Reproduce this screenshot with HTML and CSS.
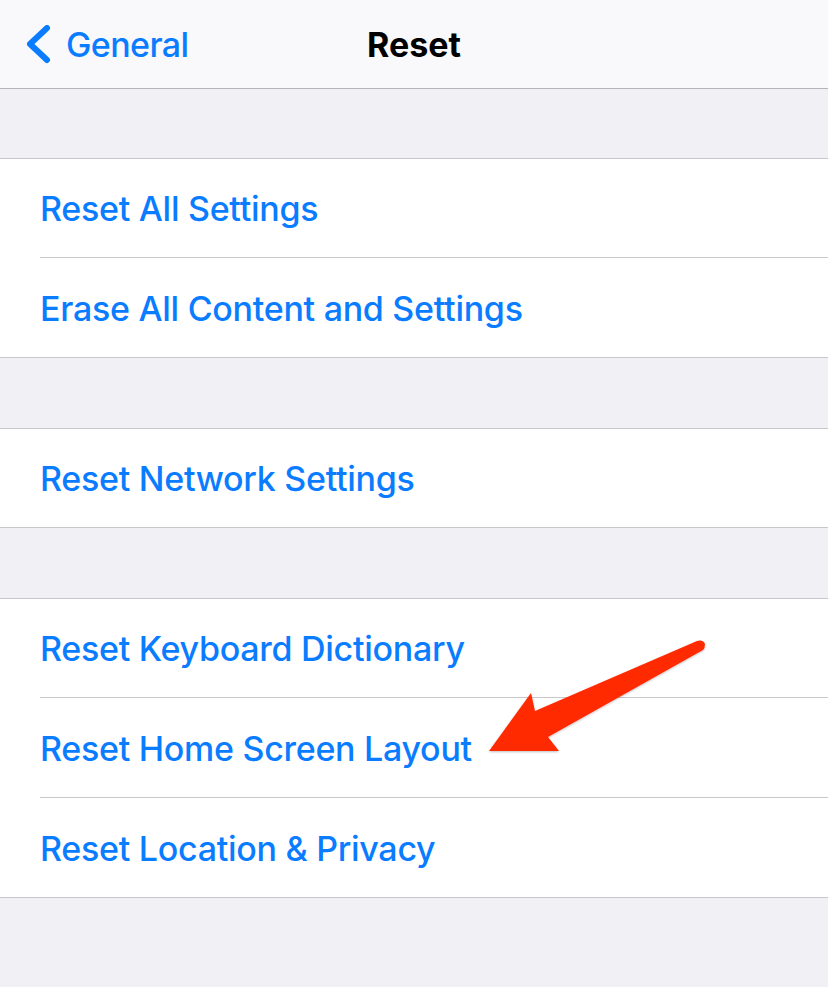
FILE: index.html
```html
<!DOCTYPE html>
<html lang="en">
<head>
    <meta charset="UTF-8">
    <meta name="viewport" content="width=device-width, initial-scale=1.0">
    <title>Reset</title>
    <link rel="stylesheet" href="styles.css">
</head>

<body>
<main class="screen">
    <header class="nav">
        <a class="back" href="#">
            <svg class="chevron" width="26" height="40" viewBox="0 0 26 40">
                <polyline points="21,3 4,19 21,35" fill="none" stroke="#0a7cff" stroke-width="6" stroke-linecap="round" stroke-linejoin="round"/>
            </svg>
            General
        </a>
        <h1 class="title">Reset</h1>
    </header>

    <div class="spacer"></div>
    <section class="group">
        <div class="row">Reset All Settings</div>
        <div class="row">Erase All Content and Settings</div>
    </section>

    <div class="spacer"></div>
    <section class="group">
        <div class="row">Reset Network Settings</div>
    </section>

    <div class="spacer"></div>
    <section class="group">
        <div class="row">Reset Keyboard Dictionary</div>
        <div class="row">Reset Home Screen Layout</div>
        <div class="row">Reset Location &amp; Privacy</div>
    </section>

    <!-- red pointer drawn over the list -->
    <svg class="pointer" width="240" height="130" viewBox="480 630 240 130">
        <defs>
            <filter id="shade" x="-10%" y="-10%" width="120%" height="130%">
                <feDropShadow dx="0" dy="1" stdDeviation="1" flood-color="#000" flood-opacity="0.25"/>
            </filter>
        </defs>
        <path d="M697,641 Q703,639 705,644 Q705,648 703,650 L548,737 L559,751 L489,751 L531,693 L535,711 Z" fill="#ff2a00" filter="url(#shade)"/>
    </svg>
</main>
</body>
</html>
```

FILE: styles.css
```css
body {
    margin: 0;
    background-color: #f0f0f5;
    font-family: Inter, "Noto Sans", sans-serif;
}

.screen {
    position: relative;
    width: 828px;
    height: 987px;
    overflow: hidden;
}

.nav {
    position: relative;
    height: 88px;
    background-color: #f9f9fb;
    border-bottom: 1px solid #b4b4b8;
    display: flex;
    align-items: center;
    justify-content: center;
}

.back {
    position: absolute;
    left: 26px;
    top: 25px;
    display: flex;
    align-items: center;
    gap: 14px;
    color: #0a7cff;
    text-decoration: none;
    font-size: 34px;
    font-weight: 500;
    letter-spacing: -0.6px;
    line-height: 40px;
}

.title {
    margin: 0;
    font-size: 34px;
    font-weight: 700;
    color: #000;
}

.spacer {
    height: 69px;
}

.group {
    background: white;
    border-top: 1px solid #c8c7cc;
    border-bottom: 1px solid #c8c7cc;
    padding-left: 40px;
}

.group + .spacer {
    height: 70px;
}

.row {
    height: 98px;
    display: flex;
    align-items: center;
    color: #0a7cff;
    font-size: 34px;
    font-weight: 500;
    letter-spacing: -0.28px;
}

.row + .row {
    box-sizing: border-box;
    height: 100px;
    border-top: 1px solid #c8c7cc;
    padding-top: 2px;
}

.pointer {
    position: absolute;
    left: 480px;
    top: 630px;
}
```
